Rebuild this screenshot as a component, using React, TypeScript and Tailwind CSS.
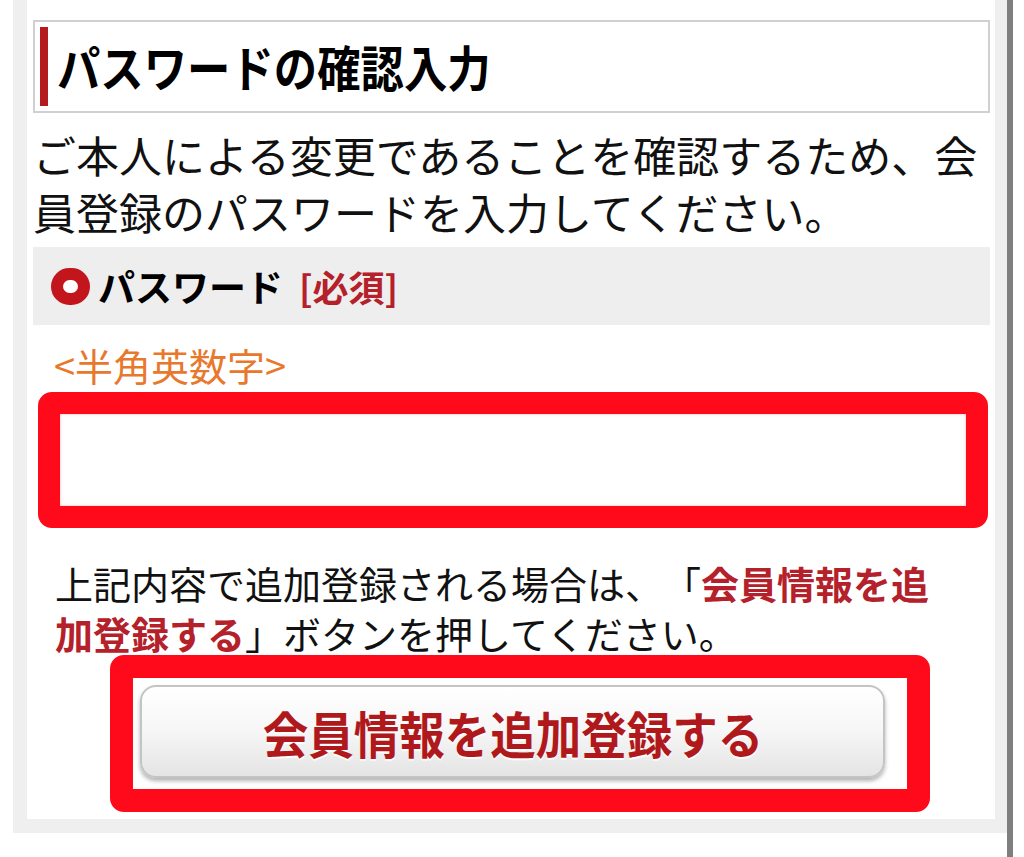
import React from "react";

export default function App() {
  return (
    <div className="relative flex h-[857px] w-[1024px] overflow-hidden bg-white font-['Noto_Sans_CJK_JP',sans-serif] text-[#111] [text-spacing-trim:space-all]">
      <div className="w-[13px] shrink-0" />
      <div className="h-[833px] w-[994px] shrink-0 bg-[#efefef] pb-[14px] pl-[14px] pr-[12px]">
        <div className="h-full bg-white pl-[6px] pr-[5px] pt-[20px]">
          {/* Heading */}
          <div className="flex h-[93px] items-center border-2 border-[#d0d0d0] pl-[5px]">
            <div className="h-[79px] w-[8px] shrink-0 bg-[#b31b1f]" />
            <div className="ml-[9px] w-[500px]">
              <span className="inline-block origin-left scale-x-[0.885] whitespace-nowrap text-[49px] font-bold leading-none text-black">
                パスワードの確認入力
              </span>
            </div>
          </div>

          {/* Description */}
          <p className="mt-[13px] text-[43px] leading-[57px]">
            ご本人による変更であることを確認するため、会員登録のパスワードを入力してください。
          </p>

          {/* Label bar */}
          <div className="mt-[7px] flex h-[78px] items-center bg-[#eeeeee] pl-[18px]">
            <div className="h-[37px] w-[39px] shrink-0 rounded-full border-[12px] border-[#c3161c] bg-white" />
            <span className="ml-[8px] text-[37px] font-bold leading-none text-black">パスワード</span>
            <span className="ml-[16px] text-[36px] font-bold leading-none text-[#b5212a]">[必須]</span>
          </div>

          {/* Hint */}
          <div className="mt-[18px] pl-[21px] text-[38px] leading-[44px] text-[#e8782c]">&lt;半角英数字&gt;</div>

          {/* Input */}
          <div className="ml-[5px] mr-[2px] mt-[5px] h-[136px] rounded-[14px] border-[22px] border-[#ff0a1a]">
            <div className="h-full w-full bg-white shadow-[inset_0_0_3px_rgba(200,60,60,0.35)]" />
          </div>

          {/* Instruction */}
          <p className="mt-[30px] pl-[22px] pr-[50px] text-[38px] leading-[50px]">
            上記内容で追加登録される場合は、「
            <span className="font-bold text-[#b5212a]">会員情報を追加登録する</span>
            」ボタンを押してください。
          </p>

          {/* Button */}
          <div className="-mt-[3px] ml-[77px] h-[157px] w-[820px] rounded-[14px] border-[23px] border-[#ff0a1a] bg-white pl-[7px] pt-[7px]">
            <button className="flex h-[93px] w-[745px] items-center justify-center rounded-[16px] border-2 border-[#c4c4c4] bg-gradient-to-b from-white via-[#f6f6f6] to-[#e4e4e4] shadow-[0_3px_4px_rgba(0,0,0,0.3)]">
              <span className="inline-block scale-x-[0.91] whitespace-nowrap text-[50px] font-bold leading-none text-[#b0191c] [text-shadow:0_2px_1px_rgba(255,255,255,0.9)]">
                会員情報を追加登録する
              </span>
            </button>
          </div>
        </div>
      </div>
      <div className="h-full w-[6px] shrink-0 bg-[#7f7f7f]" />
    </div>
  );
}
